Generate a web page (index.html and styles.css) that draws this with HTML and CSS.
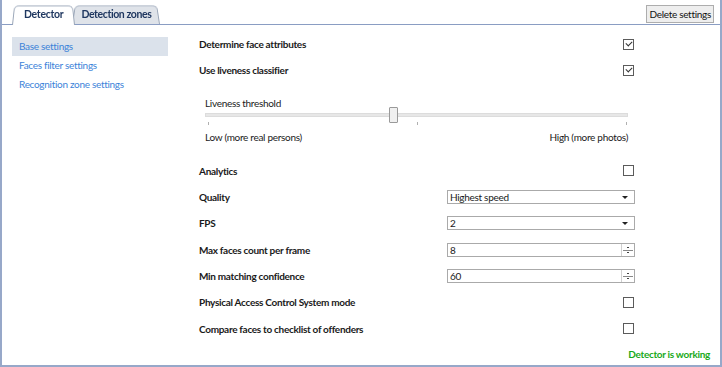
FILE: index.html
```html
<!DOCTYPE html>
<html lang="en">
  <head>
    <meta charset="UTF-8" />
    <title>Detector settings</title>
    <link rel="stylesheet" href="styles.css">
  </head>
  <body>
    <div class="window">
      <div class="tabbar">
        <div class="tab active"><span>Detector</span></div>
        <div class="tab"><span>Detection zones</span></div>
        <button class="delete-btn">Delete settings</button>
      </div>

      <div class="main">
        <ul class="sidebar">
          <li class="selected">Base settings</li>
          <li>Faces filter settings</li>
          <li>Recognition zone settings</li>
        </ul>

        <div class="settings">
          <div class="row">
            <span class="label">Determine face attributes</span>
            <span class="check checked"></span>
          </div>
          <div class="row">
            <span class="label">Use liveness classifier</span>
            <span class="check checked"></span>
          </div>

          <div class="slider">
            <div class="slider-title">Liveness threshold</div>
            <div class="track">
              <span class="thumb"></span>
            </div>
            <div class="ticks">
              <span></span>
              <span></span>
              <span></span>
            </div>
            <div class="slider-ends">
              <span>Low (more real persons)</span>
              <span>High (more photos)</span>
            </div>
          </div>

          <div class="row">
            <span class="label">Analytics</span>
            <span class="check"></span>
          </div>
          <div class="row">
            <span class="label">Quality</span>
            <div class="field combo">Highest speed</div>
          </div>
          <div class="row">
            <span class="label">FPS</span>
            <div class="field combo">2</div>
          </div>
          <div class="row">
            <span class="label">Max faces count per frame</span>
            <div class="field spin">8</div>
          </div>
          <div class="row">
            <span class="label">Min matching confidence</span>
            <div class="field spin">60</div>
          </div>
          <div class="row">
            <span class="label">Physical Access Control System mode</span>
            <span class="check"></span>
          </div>
          <div class="row">
            <span class="label">Compare faces to checklist of offenders</span>
            <span class="check"></span>
          </div>
        </div>
      </div>

      <div class="status">Detector is working</div>
    </div>
  </body>
</html>
```

FILE: styles.css
```css
* {
  box-sizing: border-box;
}

html,
body {
  margin: 0;
  padding: 0;
  background: #fff;
}

body {
  font-family: Lato, "Open Sans", sans-serif;
  font-size: 10px;
  letter-spacing: -0.3px;
  color: #1a1a1a;
}

.window {
  width: 722px;
  height: 367px;
  border-left: 2px solid #97a8c9;
  border-right: 2px solid #97a8c9;
  border-bottom: 2px solid #97a8c9;
  display: flex;
  flex-direction: column;
}

.tabbar {
  height: 25px;
  display: flex;
  align-items: flex-end;
  padding-left: 10px;
  padding-right: 6px;
  border-bottom: 1px solid #8a9dc3;
}

/* trapezoid tabs: the shape sits on a tilted pseudo element */
.tab {
  position: relative;
  height: 20px;
  line-height: 20px;
  padding: 0 9px;
  color: #1f3760;
  font-weight: bold;
  font-size: 10.5px;
}

.tab::before {
  content: "";
  position: absolute;
  inset: 0;
  border: 1px solid #9aa6b8;
  border-bottom: none;
  border-radius: 5px 5px 0 0;
  background: #dfe3e9;
  transform: perspective(30px) rotateX(6deg);
  transform-origin: bottom;
}

.tab span {
  position: relative;
}

.tab.active {
  z-index: 1;
  height: 21px;
  margin-bottom: -1px;
  padding: 0 12px 1px;
}

.tab.active::before {
  background: #fff;
}

.tab + .tab {
  margin-left: -3px;
  letter-spacing: -0.4px;
}

.delete-btn {
  margin-left: auto;
  align-self: flex-start;
  margin-top: 5px;
  height: 18px;
  padding: 0 2px;
  font-family: inherit;
  font-size: 10px;
  letter-spacing: -0.3px;
  color: #111;
  background: #eeeeee;
  border: 1px solid #adadad;
  border-radius: 0;
}

.main {
  flex: 1;
  display: flex;
}

.sidebar {
  list-style: none;
  margin: 12px 0 0 10px;
  padding: 0;
  width: 156px;
}

.sidebar li {
  height: 19px;
  line-height: 18px;
  padding-left: 7px;
  color: #3c83d9;
}

.sidebar li.selected {
  background: #dbe2eb;
}

.settings {
  margin-left: 31px;
  padding-top: 6px;
  width: 436px;
}

.row {
  height: 26.3px;
  display: flex;
  align-items: center;
  justify-content: space-between;
}

.label {
  font-weight: bold;
}

.check {
  width: 11px;
  height: 11px;
  border: 1px solid #5b5b5b;
  margin-right: 1px;
  position: relative;
}

.check.checked::after {
  content: "";
  position: absolute;
  left: 2px;
  top: 1px;
  width: 5px;
  height: 3px;
  border-left: 1px solid #333;
  border-bottom: 1px solid #333;
  transform: rotate(-45deg);
}

.field {
  width: 188px;
  height: 14px;
  border: 1px solid #aaaaaa;
  line-height: 12px;
  padding-left: 2px;
  position: relative;
}

.combo::after {
  content: "";
  position: absolute;
  right: 6px;
  top: 5px;
  border-left: 3px solid transparent;
  border-right: 3px solid transparent;
  border-top: 3px solid #222;
}

.spin::after {
  content: "";
  position: absolute;
  right: 0;
  top: 0;
  width: 12px;
  height: 12px;
  border-left: 1px solid #d0d0d0;
  background:
    linear-gradient(#444, #444) 5px 3px / 2px 1px no-repeat,
    linear-gradient(#888, #888) 1px 6px / 10px 1px no-repeat,
    linear-gradient(#444, #444) 5px 8px / 2px 1px no-repeat;
}

.slider {
  height: 74px;
  padding: 13px 7px 0 6px;
}

.slider-title {
  line-height: 12px;
}

.track {
  margin-top: 4px;
  height: 4px;
  background: #e7e7e7;
  border: 1px solid #dcdcdc;
  position: relative;
}

.thumb {
  position: absolute;
  left: 183px;
  top: -7px;
  width: 9px;
  height: 16px;
  background: #f0f0f0;
  border: 1px solid #9a9a9a;
  border-radius: 1px;
}

.ticks {
  margin-top: 5px;
  height: 4px;
  display: flex;
  justify-content: space-between;
  padding: 0 1px 0 3px;
}

.ticks span {
  width: 1px;
  height: 3px;
  background: #b0b0b0;
}

.slider-ends {
  margin-top: 5px;
  display: flex;
  justify-content: space-between;
  line-height: 12px;
}

.status {
  text-align: right;
  padding: 0 10px 5px 0;
  color: #19a919;
  font-weight: bold;
}
```
